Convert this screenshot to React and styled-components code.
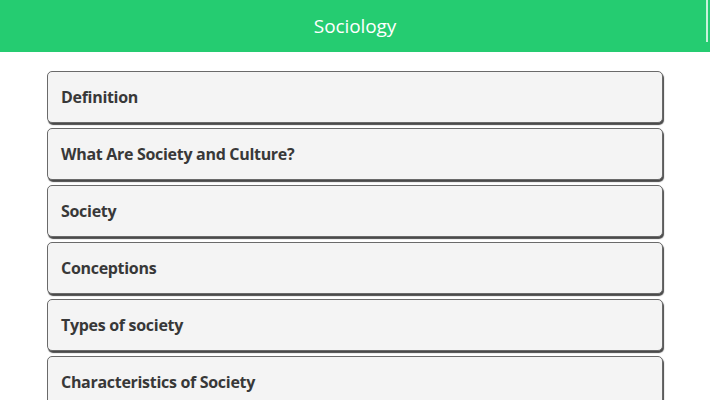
import React from "react"
import styled, { createGlobalStyle } from 'styled-components'

const GlobalStyle = createGlobalStyle`
	html, body {
		margin: 0;
		padding: 0;
		background: #ffffff;
		overflow: hidden;
	}
	body {
		font-family: "Open Sans", "Noto Sans", sans-serif;
	}
`

const Page = styled.div`
	position: relative;
	width: 710px;
	height: 400px;
	overflow: hidden;
`

const Header = styled.header`
	height: 52px;
	background-color: #25cc71;
	display: flex;
	justify-content: center;
	align-items: center;
`

const Title = styled.h1`
	margin: 0;
	color: #ffffff;
	font-size: 19px;
	font-weight: 400;
	letter-spacing: -0.1px;
	padding-bottom: 1px;
`

const ScrollThumb = styled.div`
	position: absolute;
	top: 0;
	right: 2px;
	width: 2px;
	height: 42px;
	background: rgba(255, 255, 255, 0.75);
`

const List = styled.ul`
	list-style: none;
	margin: 0;
	padding: 19px 47px 0 47px;
	display: flex;
	flex-direction: column;
	gap: 5px;
`

const Item = styled.li`
	box-sizing: border-box;
	height: 52px;
	display: flex;
	align-items: center;
	padding: 0 13px 1px;
	background-color: #f4f4f4;
	border: 1px solid #6a6a6a;
	border-radius: 5px;
	box-shadow: 1px 2px 1px #4a4a4a;
	color: #383838;
	font-size: 16px;
	font-weight: 700;
	letter-spacing: -0.3px;
`

const topics = [
	'Definition',
	'What Are Society and Culture?',
	'Society',
	'Conceptions',
	'Types of society',
	'Characteristics of Society',
]

const App = () => (
	<Page>
		<GlobalStyle />
		<Header>
			<Title>Sociology</Title>
		</Header>
		<ScrollThumb />
		<List>
			{topics.map(topic => (
				<Item key={topic}>{topic}</Item>
			))}
		</List>
	</Page>
)

export default App
